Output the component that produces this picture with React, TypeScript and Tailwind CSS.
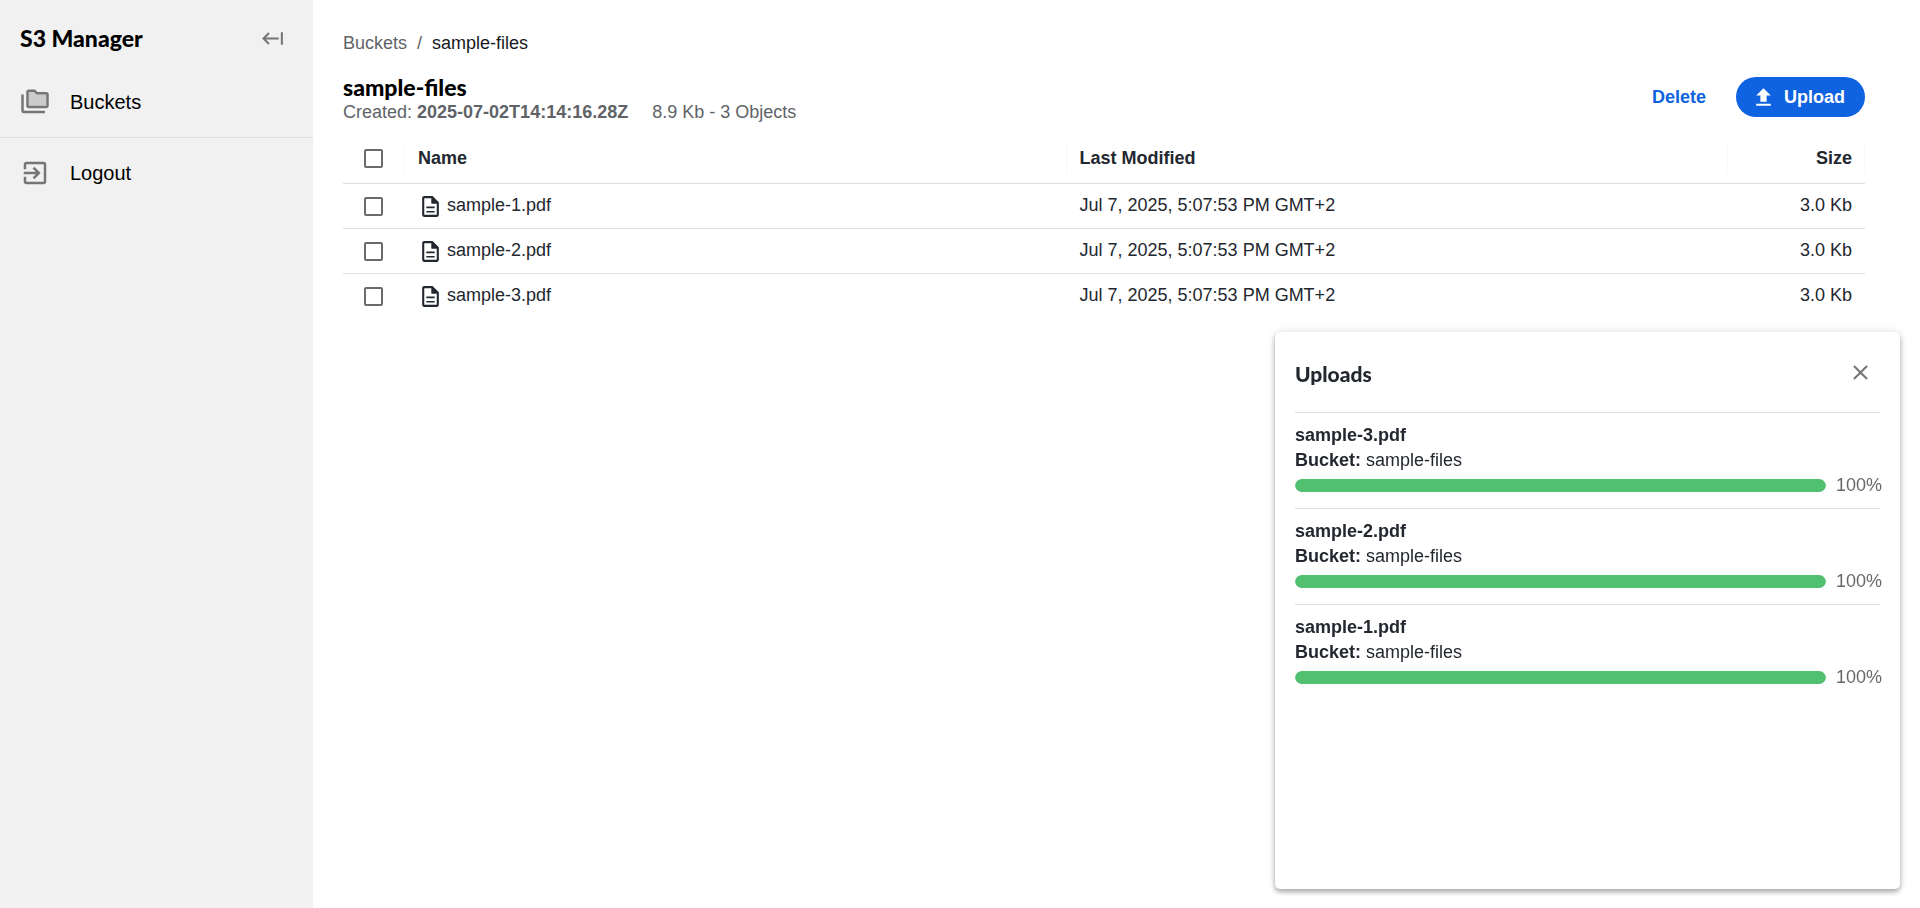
import { useState } from 'react';
import type { ReactNode } from 'react';

interface BucketObject {
  name: string;
  lastModified: string;
  size: string;
}

interface UploadItem {
  name: string;
  bucket: string;
  progress: number;
}

const OBJECTS: BucketObject[] = [
  { name: 'sample-1.pdf', lastModified: 'Jul 7, 2025, 5:07:53 PM GMT+2', size: '3.0 Kb' },
  { name: 'sample-2.pdf', lastModified: 'Jul 7, 2025, 5:07:53 PM GMT+2', size: '3.0 Kb' },
  { name: 'sample-3.pdf', lastModified: 'Jul 7, 2025, 5:07:53 PM GMT+2', size: '3.0 Kb' },
];

const UPLOADS: UploadItem[] = [
  { name: 'sample-3.pdf', bucket: 'sample-files', progress: 100 },
  { name: 'sample-2.pdf', bucket: 'sample-files', progress: 100 },
  { name: 'sample-1.pdf', bucket: 'sample-files', progress: 100 },
];

function Icon({ className, children }: { className: string; children: ReactNode }) {
  return (
    <svg className={`shrink-0 ${className}`} viewBox="0 0 24 24" fill="currentColor" aria-hidden="true">
      {children}
    </svg>
  );
}

function Checkbox({ label, checked, onChange }: { label: string; checked: boolean; onChange: () => void }) {
  return (
    <input
      type="checkbox"
      aria-label={label}
      checked={checked}
      onChange={onChange}
      className="block mx-auto size-[19px] appearance-none rounded-[2px] border-2 border-[#696b6f] bg-white checked:bg-[#0f62e0]"
    />
  );
}

function Sidebar() {
  return (
    <aside className="w-[313px] shrink-0 bg-[#f1f1f1] text-black">
      <div className="flex items-center justify-between pl-5 pr-7 pt-6">
        <h1 className="font-['Lato',sans-serif] text-[23px] leading-7 font-black">S3 Manager</h1>
        <button aria-label="Collapse sidebar" className="text-[#757575]">
          <Icon className="size-[25px]">
            <path d="M9.3 7.4 7.9 6 2 12l5.9 6 1.4-1.4L5.7 13H18v-2H5.7zM20 6v12h2V6z" />
          </Icon>
        </button>
      </div>
      <nav className="mt-5">
        <a href="#buckets" className="flex items-center gap-5 px-5 pb-5 text-xl leading-[30px] border-b border-[#dedede] pt-[15px]">
          <Icon className="size-[30px] text-[#757575]">
            <path opacity=".3" d="M7 15h14V6h-7.83l-2-2H7v11z" />
            <path d="M3 6H1v13c0 1.1.9 2 2 2h17v-2H3V6z" />
            <path d="M21 4h-7l-2-2H7c-1.1 0-1.99.9-1.99 2L5 15c0 1.1.9 2 2 2h14c1.1 0 2-.9 2-2V6c0-1.1-.9-2-2-2zm0 11H7V4h4.17l2 2H21v9z" />
          </Icon>
          Buckets
        </a>
        <a href="#logout" className="flex items-center gap-5 px-5 py-5 text-xl leading-[30px]">
          <Icon className="size-[30px] text-[#757575]">
            <path d="M10.09 15.59L11.5 17l5-5-5-5-1.41 1.41L12.67 11H3v2h9.67l-2.58 2.59zM19 3H5c-1.11 0-2 .9-2 2v4h2V5h14v14H5v-4H3v4c0 1.1.89 2 2 2h14c1.1 0 2-.9 2-2V5c0-1.1-.9-2-2-2z" />
          </Icon>
          Logout
        </a>
      </nav>
    </aside>
  );
}

function ObjectTable() {
  const [selected, setSelected] = useState<string[]>([]);
  const allSelected = selected.length === OBJECTS.length;

  const toggle = (name: string) =>
    setSelected(prev => (prev.includes(name) ? prev.filter(n => n !== name) : [...prev, name]));

  return (
    <table className="mt-2 w-full table-fixed border-collapse">
      <colgroup>
        <col className="w-[62px]" />
        <col />
        <col />
        <col className="w-[137px]" />
      </colgroup>
      <thead>
        <tr className="border-b border-[#dedede] text-left">
          <th className="py-[10px]">
            <div className="flex h-[30px] items-center border-r border-[#f7f7f7]">
              <Checkbox
                label="Select all objects"
                checked={allSelected}
                onChange={() => setSelected(allSelected ? [] : OBJECTS.map(o => o.name))}
              />
            </div>
          </th>
          <th className="py-[10px]">
            <div className="h-[30px] border-r border-[#f7f7f7] px-[13px] leading-[30px]">Name</div>
          </th>
          <th className="py-[10px]">
            <div className="h-[30px] border-r border-[#f7f7f7] px-[13px] leading-[30px]">Last Modified</div>
          </th>
          <th className="py-[10px]">
            <div className="h-[30px] border-r border-[#f7f7f7] px-3 text-right leading-[30px]">Size</div>
          </th>
        </tr>
      </thead>
      <tbody>
        {OBJECTS.map(object => (
          <tr key={object.name} className="h-[45px] border-b border-[#dedede] last:border-b-0">
            <td className="pr-px">
              <Checkbox
                label={`Select ${object.name}`}
                checked={selected.includes(object.name)}
                onChange={() => toggle(object.name)}
              />
            </td>
            <td className="px-[13px]">
              <div className="flex items-start gap-1">
                <Icon className="size-[25px] mt-px">
                  <path d="M14 2H6c-1.1 0-2 .9-2 2v16c0 1.1.9 2 2 2h12c1.1 0 2-.9 2-2V8l-6-6zM6 20V4h7v5h5v11H6z" />
                  <path d="M13 4v5h5zM8 12h8v1.6H8zM8 16.2h8v1.6H8z" />
                </Icon>
                {object.name}
              </div>
            </td>
            <td className="px-[13px] pb-[2px]">{object.lastModified}</td>
            <td className="px-[13px] pb-[2px] text-right">{object.size}</td>
          </tr>
        ))}
      </tbody>
    </table>
  );
}

function UploadsPanel({ onClose }: { onClose: () => void }) {
  return (
    <section
      aria-label="Uploads"
      className="fixed right-5 bottom-[19px] flex h-[557px] w-[625px] flex-col rounded-[5px] bg-white px-5 shadow-[0_3px_5px_rgba(0,0,0,0.3),0_0_10px_rgba(0,0,0,0.12)]"
    >
      <div className="flex items-center justify-between border-b border-[#dedede] pt-5 pb-5 pr-[7px]">
        <h2 className="pt-1 font-['Lato',sans-serif] text-[21px] leading-9 font-black">Uploads</h2>
        <button aria-label="Close uploads" className="text-[#757575]" onClick={onClose}>
          <Icon className="size-[25px]">
            <path d="M19 6.41L17.59 5 12 10.59 6.41 5 5 6.41 10.59 12 5 17.59 6.41 19 12 13.41 17.59 19 19 17.59 13.41 12z" />
          </Icon>
        </button>
      </div>
      <ul>
        {UPLOADS.map(upload => (
          <li key={upload.name} className="border-b border-[#dedede] py-[10px] last:border-b-0">
            <p className="font-bold">{upload.name}</p>
            <p>
              <strong>Bucket:</strong> {upload.bucket}
            </p>
            <div className="flex items-center">
              <div
                role="progressbar"
                aria-label={upload.name}
                aria-valuenow={upload.progress}
                className="h-[13px] flex-1 overflow-hidden rounded-full bg-[#e5e5e5]"
              >
                <div className="h-full rounded-full bg-[#51c071]" style={{ width: `${upload.progress}%` }} />
              </div>
              <span className="w-[54px] pl-[10px] text-[#67696d]">{upload.progress}%</span>
            </div>
          </li>
        ))}
      </ul>
    </section>
  );
}

export default function App() {
  const [showUploads, setShowUploads] = useState(true);

  return (
    <div className="flex min-h-screen bg-white font-['Liberation_Sans',Arial,sans-serif] text-lg leading-[25px] text-[#23272f]">
      <Sidebar />
      <main className="min-w-0 flex-1 pt-[31px] pr-[55px] pl-[30px]">
        <nav aria-label="Breadcrumb" className="flex gap-[10px] text-[#5f6368]">
          <a href="#buckets">Buckets</a>
          <span>/</span>
          <span className="text-[#16191f]">sample-files</span>
        </nav>

        <header className="mt-[21px] flex items-start justify-between">
          <div>
            <h2 className="font-['Lato',sans-serif] text-[23px] leading-5 pb-[3px] font-black text-black">sample-files</h2>
            <div className="flex gap-6 text-[#5f6368]">
              <p>
                Created: <strong>2025-07-02T14:14:16.28Z</strong>
              </p>
              <p>8.9 Kb - 3 Objects</p>
            </div>
          </div>
          <div className="flex items-center gap-[30px] font-bold">
            <button className="text-[#0f62e0]">Delete</button>
            <button className="flex h-10 items-center gap-2 rounded-full bg-[#0f62e0] pr-5 pl-[15px] text-white">
              <Icon className="size-[25px]">
                <path d="M9 16h6v-6h4l-7-7-7 7h4zm-4 2h14v2H5z" />
              </Icon>
              Upload
            </button>
          </div>
        </header>

        <ObjectTable />
      </main>
      {showUploads && <UploadsPanel onClose={() => setShowUploads(false)} />}
    </div>
  );
}
